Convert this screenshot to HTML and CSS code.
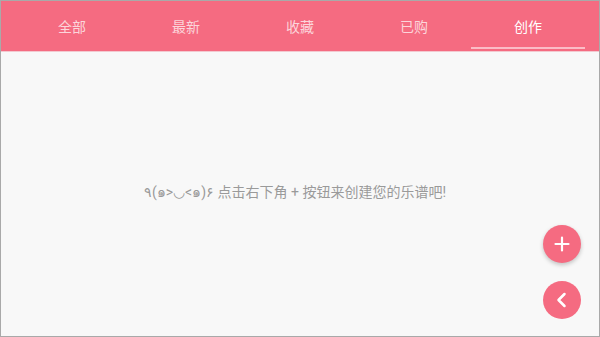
FILE: index.html
```html
<!DOCTYPE html>
<html lang="zh">
<head>
<meta charset="utf-8">
<link rel="stylesheet" href="styles.css">
</head>
<body>
<div class="app">
  <nav class="tabs">
    <div class="tab">全部</div>
    <div class="tab">最新</div>
    <div class="tab">收藏</div>
    <div class="tab">已购</div>
    <div class="tab active">创作</div>
  </nav>
  <main class="content">
    <p class="empty">٩(๑&gt;◡&lt;๑)۶ 点击右下角 + 按钮来创建您的乐谱吧!</p>
    <button class="fab fab-add" aria-label="add">
      <svg width="16" height="16" viewBox="0 0 16 16"><path d="M8 1.5v13M1.5 8h13" stroke="#fff" stroke-width="2.2" stroke-linecap="round"/></svg>
    </button>
    <button class="fab fab-back" aria-label="back">
      <svg width="18" height="18" viewBox="0 0 18 18"><path d="M11.5 3L5.5 9l6 6" fill="none" stroke="#fff" stroke-width="2.5" stroke-linecap="round" stroke-linejoin="round"/></svg>
    </button>
  </main>
</div>
</body>
</html>
```
FILE: styles.css
```css
* { box-sizing: border-box; }
html, body { margin: 0; padding: 0; }
body {
  width: 600px;
  height: 337px;
  overflow: hidden;
  font-family: "Roboto", "Noto Sans CJK SC", "Noto Sans", sans-serif;
}
.app {
  width: 600px;
  height: 337px;
  border: 1px solid #a9a9a9;
  display: flex;
  flex-direction: column;
  background: #f8f8f8;
}
.tabs {
  height: 51px;
  background: #f56b81;
  display: flex;
  padding: 0 14px;
  border-bottom: 1px solid #f3c9d0;
}
.tab {
  flex: 1;
  display: flex;
  align-items: center;
  justify-content: center;
  color: rgba(255, 255, 255, 0.72);
  font-size: 14px;
  padding-bottom: 1px;
  position: relative;
}
.tab.active {
  color: #fff;
}
.tab.active::after {
  content: "";
  position: absolute;
  left: 0;
  right: 0;
  bottom: 2px;
  height: 2px;
  background: rgba(255, 255, 255, 0.55);
}
.content {
  flex: 1;
  position: relative;
  display: flex;
  align-items: center;
  justify-content: center;
  padding: 0 10px 4px 0;
}
.empty {
  margin: 0;
  color: #9a9a9a;
  font-size: 14px;
}
.fab {
  position: absolute;
  right: 18px;
  width: 38px;
  height: 38px;
  border-radius: 50%;
  border: none;
  padding: 0;
  background: #f56b81;
  display: flex;
  align-items: center;
  justify-content: center;
}
.fab-add {
  top: 173px;
  box-shadow: 0 2px 4px rgba(0, 0, 0, 0.22);
}
.fab-back {
  top: 229px;
}
```
